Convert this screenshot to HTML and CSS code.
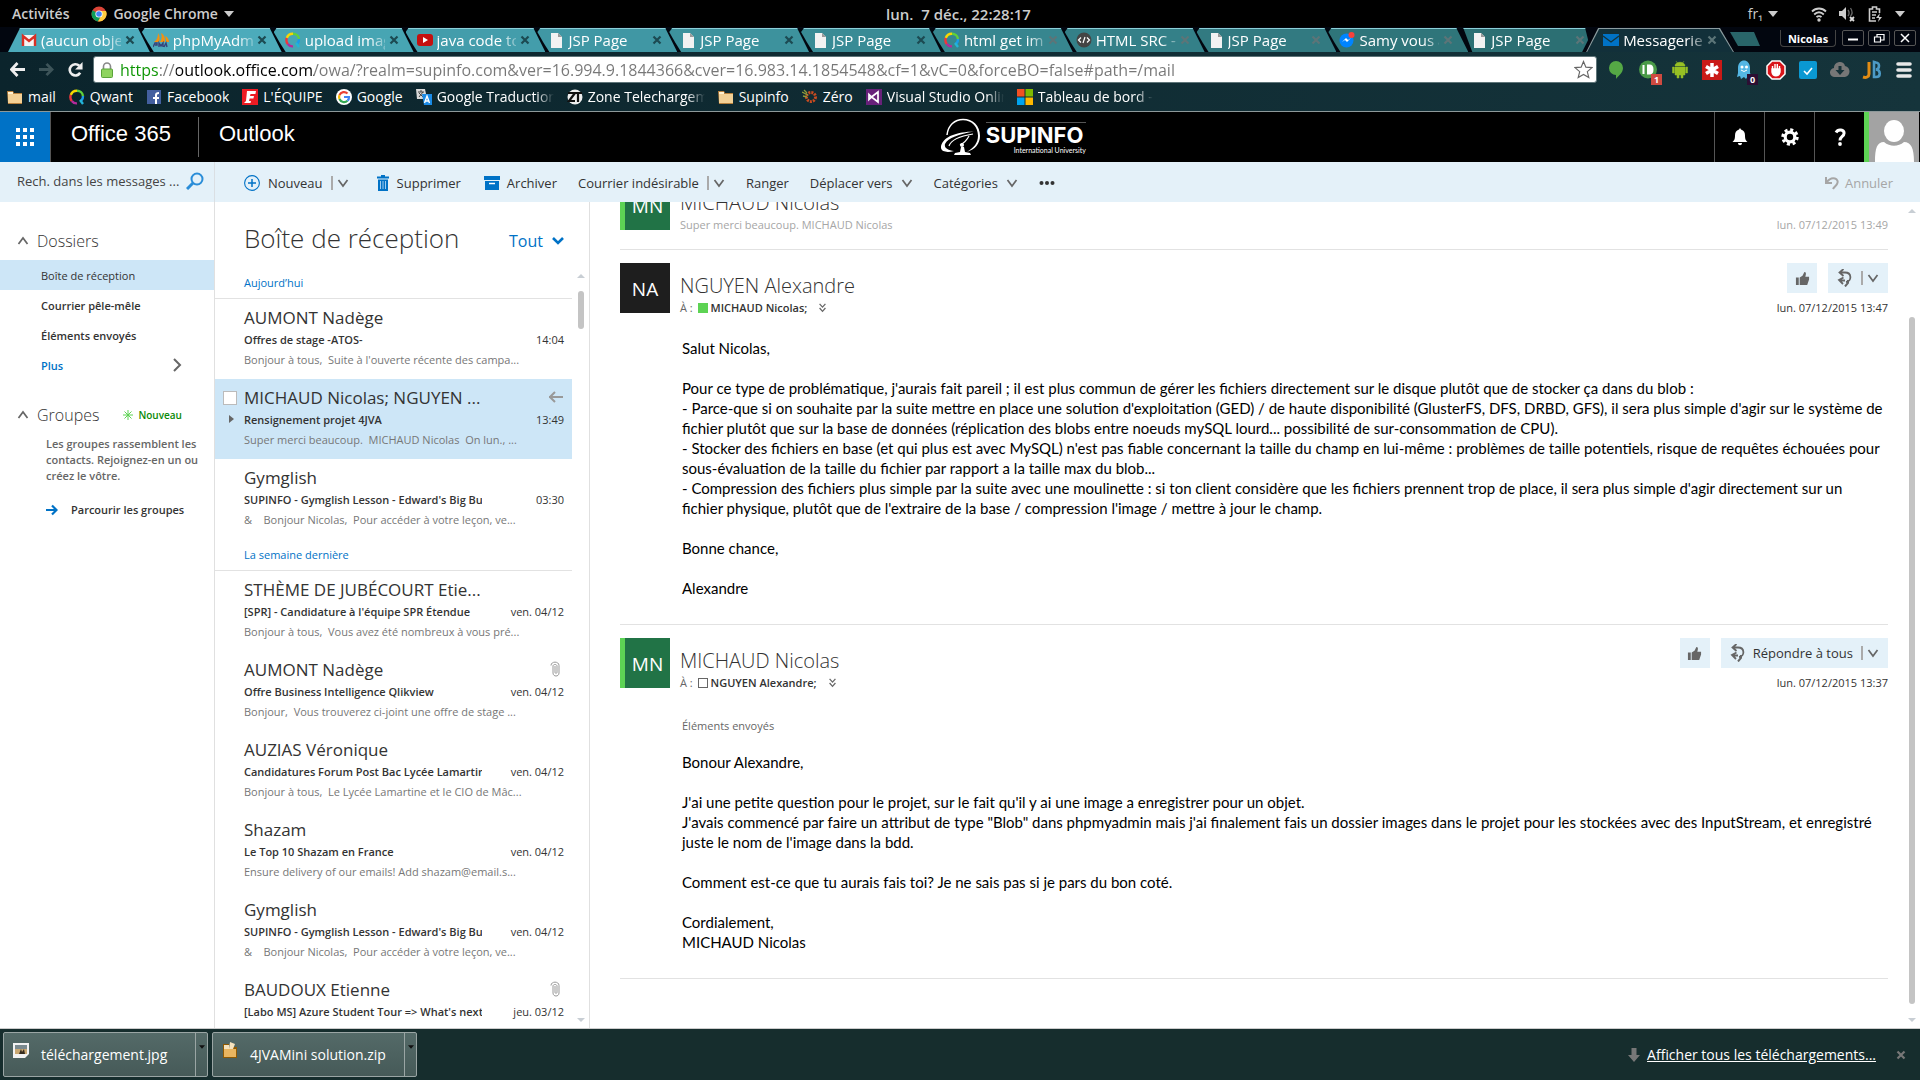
FILE: index.html
```html
<!DOCTYPE html>
<html lang="fr">
<head>
<meta charset="utf-8">
<title>Messagerie</title>
<link rel="stylesheet" href="styles.css">
</head>
<body>
<svg class="defs" aria-hidden="true">
  <symbol id="page" viewBox="0 0 16 16"><path d="M3 1h7l4 4v11H3z" fill="#f2f2f2"/><path d="M10 1v4h4z" fill="#9a9a9a"/></symbol>
  <symbol id="qwant" viewBox="0 0 16 16"><g fill="none" stroke-width="2.4"><path d="M1.8 6A6.4 6.4 0 0 1 8 1.8" stroke="#f8d800"/><path d="M8 1.8A6 6 0 0 1 14 7" stroke="#5fd03a"/><path d="M14 7a6 6 0 0 1-2 5" stroke="#1c9be8"/><path d="M1.8 6a6.2 6.2 0 0 0 1 6" stroke="#f0363c"/><path d="M2.8 12A6 6 0 0 0 8 14.4" stroke="#b42a9c"/><path d="M11 11l3 4" stroke="#23b5d8"/></g></symbol>
  <symbol id="folder" viewBox="0 0 16 16"><path d="M0 2h6l1 2h8v11H1z" fill="#b67f3c"/><path d="M1 5h14v9H1z" fill="#f3d095"/><path d="M1 3h5v2H1z" fill="#fff0d0"/></symbol>
  <symbol id="chev" viewBox="0 0 12 12"><path d="M1.500 3l4.500 6 4.500-6" fill="none" stroke="currentColor" stroke-width="1.700"/></symbol>
  <symbol id="chevup" viewBox="0 0 12 12"><path d="M1.500 9l4.500-6 4.500 6" fill="none" stroke="currentColor" stroke-width="1.700"/></symbol>
  <symbol id="cross" viewBox="0 0 10 10"><path d="M1.500 1.500l7 7m0-7l-7 7" stroke="currentColor" stroke-width="2.200"/></symbol>
  <symbol id="tri" viewBox="0 0 10 10"><path d="M0 2h10l-5 6z" fill="currentColor"/></symbol>
  <symbol id="clip" viewBox="0 0 10 16"><path d="M1 4.500C1 0 9 0 9 4.500V12c0 4-6 4-6 0V5c0-2 4-2 4 0v6.500c0 1-2 1-2 0V5" fill="none" stroke="currentColor"/></symbol>
  <symbol id="thumb" viewBox="0 0 16 16"><path d="M1 7h3v8H1zM5 7l3-2 2-4c2 0 2 2 1 5h4v3l-2 6H5z" fill="currentColor"/></symbol>
  <symbol id="replyall" viewBox="0 0 16 18"><path d="M6.500 0L2.500 3.500l4 3.500M3 3.500h5c7 0 7 9 1 9.500M6.500 8.500L2 11l4 4M2 11.500h6" fill="none" stroke="currentColor" stroke-width="1.800"/><path d="M11 11v3l-3 3.500" fill="none" stroke="currentColor" stroke-width="2"/></symbol>
  <symbol id="dbl" viewBox="0 0 10 12"><path d="M1.500 1L5 5l3.500-4M1.500 6L5 10l3.500-4" fill="none" stroke="currentColor" stroke-width="1.500"/></symbol>
</svg>

<header class="desk">
  <div class="desk-left">
    <span>Activités</span>
    <span class="app"><svg class="i16" viewBox="0 0 16 16"><circle cx="8" cy="8" r="7.500" fill="#db4437"/><path d="M8 8L1.500 4.200A7.500 7.500 0 0 0 7 15.400l3-5.400z" fill="#0f9d58"/><path d="M8 8h-1l3 2-3 5.400A7.500 7.500 0 0 0 15 5H8z" fill="#ffcd40"/><circle cx="8" cy="8" r="3.600" fill="#fff"/><circle cx="8" cy="8" r="2.800" fill="#4285f4"/></svg>Google Chrome<svg class="i10"><use href="#tri"/></svg></span>
  </div>
  <time class="clock">lun.&nbsp; 7 déc., 22:28:17</time>
  <div class="desk-right">
    <span class="lang">fr₁<svg class="i10"><use href="#tri"/></svg></span>
    <svg class="i16" viewBox="0 0 16 16"><g fill="none" stroke="#ccc" stroke-width="1.800"><path d="M1 5.500c4-4 10-4 14 0M3.200 8.500c3-3 6.600-3 9.600 0M5.500 11.200c1.500-1.500 3.500-1.500 5 0"/></g><circle cx="8" cy="14" r="1.700" fill="#ccc"/></svg>
    <svg class="i16" viewBox="0 0 16 16"><path d="M0 5h3l4-4v13l-4-4H0z" fill="#ccc"/><path d="M9 4c1.500 2 1.500 4 0 6M11.500 2c2 3 2 6 0 8" fill="none" stroke="#666" stroke-width="1.300"/><path d="M11 11l4 4m0-4l-4 4" stroke="#ddd" stroke-width="1.800"/></svg>
    <svg class="i16" viewBox="0 0 16 16"><path d="M9 15H2.500V3h3V1h4v2h3v4M5 6h5M5 9h4M5 12h3" fill="none" stroke="#ccc" stroke-width="1.600"/><path d="M13 7l-4 5h3l-1 4 4-5h-3z" fill="#ccc"/></svg>
    <svg class="i10"><use href="#tri"/></svg>
  </div>
</header>

<div class="strip">
  <nav class="tabs" aria-label="Onglets">
    <div class="tab"><svg class="i16" viewBox="0 0 16 16"><path d="M1 3h14v11H1z" fill="#f4f4f4"/><path d="M2 14V4l6 5 6-5v10" fill="none" stroke="#d93025" stroke-width="2.400"/></svg><span class="lbl">(aucun objet)</span><button aria-label="Fermer"><svg><use href="#cross"/></svg></button></div>
    <div class="tab"><svg class="i16" viewBox="0 0 16 16"><path d="M1 10c3-2 4-5 4-9 2 3 2 6 1 9zM7 10c2-3 2-6 1-9 4 2 4 6 4 9zM13 10c0-2 0-4-1-6 3 1 4 4 4 6z" fill="#f29111"/><path d="M0 15l2-4h2v2H2m4 2v-4l2 3 2-3v4m1 0l2-4 1 4" fill="none" stroke="#37427a" stroke-width="1.400"/></svg><span class="lbl">phpMyAdmin</span><button aria-label="Fermer"><svg><use href="#cross"/></svg></button></div>
    <div class="tab"><svg class="i16"><use href="#qwant"/></svg><span class="lbl">upload image</span><button aria-label="Fermer"><svg><use href="#cross"/></svg></button></div>
    <div class="tab"><svg class="i16" viewBox="0 0 16 16"><rect y="2" width="16" height="12" rx="3" fill="#c4100f"/><path d="M6 5l5 3-5 3z" fill="#fff"/></svg><span class="lbl">java code to</span><button aria-label="Fermer"><svg><use href="#cross"/></svg></button></div>
    <div class="tab"><svg class="i16"><use href="#page"/></svg><span class="lbl">JSP Page</span><button aria-label="Fermer"><svg><use href="#cross"/></svg></button></div>
    <div class="tab"><svg class="i16"><use href="#page"/></svg><span class="lbl">JSP Page</span><button aria-label="Fermer"><svg><use href="#cross"/></svg></button></div>
    <div class="tab"><svg class="i16"><use href="#page"/></svg><span class="lbl">JSP Page</span><button aria-label="Fermer"><svg><use href="#cross"/></svg></button></div>
    <div class="tab"><svg class="i16"><use href="#qwant"/></svg><span class="lbl">html get image</span><button aria-label="Fermer"><svg><use href="#cross"/></svg></button></div>
    <div class="tab"><svg class="i16" viewBox="0 0 16 16"><circle cx="8" cy="8" r="7.500" fill="#444"/><path d="M5 5.500L2.500 8 5 10.500M11 5.500L13.500 8 11 10.500M9 5l-2 6" fill="none" stroke="#fff" stroke-width="1.200"/></svg><span class="lbl">HTML SRC -</span><button aria-label="Fermer"><svg><use href="#cross"/></svg></button></div>
    <div class="tab"><svg class="i16"><use href="#page"/></svg><span class="lbl">JSP Page</span><button aria-label="Fermer"><svg><use href="#cross"/></svg></button></div>
    <div class="tab"><svg class="i16" viewBox="0 0 16 16"><circle cx="7.500" cy="8.500" r="7" fill="#0084ff"/><path d="M3 10l4-4 2 2 3-2-4 4-2-2z" fill="#fff"/><circle cx="12.500" cy="3" r="3" fill="#f8413b"/></svg><span class="lbl">Samy vous a</span><button aria-label="Fermer"><svg><use href="#cross"/></svg></button></div>
    <div class="tab"><svg class="i16"><use href="#page"/></svg><span class="lbl">JSP Page</span><button aria-label="Fermer"><svg><use href="#cross"/></svg></button></div>
    <div class="tab active"><svg class="i16" viewBox="0 0 16 16"><path d="M0 2h16v12H0z" fill="#0072c6"/><path d="M0 4l8 6 8-6" fill="none" stroke="#12333b" stroke-width="1.300"/></svg><span class="lbl">Messagerie</span><button aria-label="Fermer"><svg><use href="#cross"/></svg></button></div>
  </nav>
  <div class="strip-right">
    <button class="newtab" aria-label="Nouvel onglet"></button>
    <button class="user">Nicolas</button>
    <div class="wins">
      <button aria-label="Réduire"><svg viewBox="0 0 20 14"><path d="M5 8.500h10" stroke="#fff" stroke-width="2"/></svg></button>
      <button aria-label="Restaurer"><svg viewBox="0 0 20 14"><path d="M8 6V3.500h7V9h-3M5.500 6h6v5h-6z" fill="none" stroke="#fff" stroke-width="1.200"/></svg></button>
      <button aria-label="Fermer"><svg viewBox="0 0 20 14"><path d="M6 3l8 8m0-8l-8 8" stroke="#fff" stroke-width="1.500"/></svg></button>
    </div>
  </div>
</div>

<div class="chrome">
  <div class="navrow">
    <div class="navbtns">
      <button aria-label="Retour"><svg viewBox="0 0 16 16"><path d="M8 1L1.500 8 8 15M2 8h14" fill="none" stroke="#eee" stroke-width="3"/></svg></button>
      <button aria-label="Avancer"><svg viewBox="0 0 16 16"><path d="M8 2l6 6-6 6M0 8h13" fill="none" stroke="#3d5459" stroke-width="3"/></svg></button>
      <button aria-label="Actualiser"><svg viewBox="0 0 16 16"><path d="M13 11.500A6 6 0 1 1 12 4" fill="none" stroke="#eee" stroke-width="2.800"/><path d="M15.500 0v8h-8z" fill="#eee"/></svg></button>
    </div>
    <div class="omni">
      <svg class="lock" viewBox="0 0 12 16"><path d="M2.500 8V4.500a3.500 3.500 0 0 1 7 0V8" fill="none" stroke="#888" stroke-width="1.600"/><rect x=".500" y="7" width="11" height="8.500" rx="1" fill="#8fd45f" stroke="#5ba33a"/></svg>
      <input class="url" aria-label="Adresse" value="https://outlook.office.com/owa/?realm=supinfo.com&amp;ver=16.994.9.1844366&amp;cver=16.983.14.1854548&amp;cf=1&amp;vC=0&amp;forceBO=false#path=/mail">
      <svg class="star" viewBox="0 0 20 20"><path d="M10 1.500l2.500 6 6.500.500-5 4.200 1.600 6.300L10 15.200 4.400 18.500 6 12.200 1 8l6.500-.500z" fill="#fff" stroke="#666" stroke-width="1.200"/></svg>
    </div>
    <div class="exts">
      <svg viewBox="0 0 20 20"><path d="M10 1a7 7 0 0 1 7 7c0 5-5 8-7 11v-4a7 7 0 0 1 0-14z" fill="#55a845"/></svg>
      <span class="ext"><svg viewBox="0 0 20 20"><circle cx="10" cy="9.500" r="9" fill="#4a9a48"/><path d="M5.500 5v9M10 5.500v8h1.500c4 0 4-8 0-8z" fill="#fff" stroke="#fff" stroke-width="2"/></svg><b class="badge red">1</b></span>
      <svg viewBox="0 0 20 20"><path d="M5 7h10v8H5zM5 6c0-5 10-5 10 0zM2.500 7h1.800v6H2.500zM15.700 7h1.800v6h-1.800zM7 14h2v4H7zM11 14h2v4h-2zM6 1l2 3m6-3l-2 3" fill="#97c024" stroke="#97c024" stroke-width=".500"/></svg>
      <svg viewBox="0 0 20 20"><path d="M0 0h20v20H0z" fill="#ca1a17"/><path d="M10 3v14M4 6.500l12 7M16 6.500l-12 7" stroke="#fff" stroke-width="3.500"/></svg>
      <span class="ext"><svg viewBox="0 0 20 20"><path d="M4 8c0-10 12-10 12 0v5l2 4-4-1-2 3-2-2-3 2-1-3-3 1 1-4z" fill="#54b6e4"/><circle cx="8" cy="7" r="1.500" fill="#fff"/><circle cx="12.500" cy="7" r="1.500" fill="#fff"/><path d="M7 10q3 3 6 0" stroke="#fff" fill="none"/></svg><b class="badge">0</b></span>
      <svg viewBox="0 0 20 20"><path d="M6 1h8l5 5v8l-5 5H6l-5-5V6z" fill="#d9141a" stroke="#fff" stroke-width="1.500"/><path d="M6.500 10V6M9 9V4M11.300 9V4M13.500 10V6M6 9v3c1 5 7 5 8 0V9z" stroke="#fff" stroke-width="1.400" fill="#fff"/></svg>
      <svg viewBox="0 0 20 20"><rect x="1" y="1" width="18" height="18" rx="2" fill="#0a98d2"/><path d="M6 11l3 3 5-6" fill="none" stroke="#fff" stroke-width="1.600"/></svg>
      <svg viewBox="0 0 20 20"><path d="M5 17a4.500 4.500 0 0 1-1-9c0-7 10-8 11-2 6 1 6 10 0 11z" fill="#777"/><path d="M8.500 6h3v4h3L10 15l-4.500-5h3z" fill="#173239"/></svg>
      <svg viewBox="0 0 20 20"><path d="M7 2v12c0 3-3 4-6 3" fill="none" stroke="#e28c14" stroke-width="3"/><path d="M12 2v15h2c5 0 5-7 0-7.500 4-.500 4-7 0-7z" fill="none" stroke="#4c9ac6" stroke-width="2.600"/></svg>
      <svg viewBox="0 0 20 20"><path d="M4 4h12M4 10h12M4 16h12" stroke="#e8e8e8" stroke-width="3.600" stroke-linecap="round"/></svg>
    </div>
  </div>
  <nav class="marks" aria-label="Favoris">
    <a href="#"><svg class="i16"><use href="#folder"/></svg><span>mail</span></a>
    <a href="#"><svg class="i16"><use href="#qwant"/></svg><span>Qwant</span></a>
    <a href="#"><svg class="i16" viewBox="0 0 16 16"><path d="M1 1h14v14H1z" fill="#435f9f"/><path d="M10 15V9M7 9h6M10 9V6c0-1.500 1-2 3-2" fill="none" stroke="#fff" stroke-width="2"/></svg><span>Facebook</span></a>
    <a href="#"><svg class="i16" viewBox="0 0 16 16"><path d="M0 0h16v16H0z" fill="#ed1c24"/><path d="M5 2h9l-.600 3H8.500L8 7h4l-.600 2.500H7.600L7 12h2l-.500 2H2l2-2z" fill="#fff"/></svg><span>L'ÉQUIPE</span></a>
    <a href="#"><svg class="i16" viewBox="0 0 16 16"><circle cx="8" cy="8" r="8" fill="#fff"/><g fill="none" stroke-width="2.200"><path d="M11.500 4.500A5 5 0 0 0 3.500 6" stroke="#ea4335"/><path d="M3.500 6a5 5 0 0 0 0 4" stroke="#fbbc05"/><path d="M3.500 10a5 5 0 0 0 8 1.800" stroke="#34a853"/><path d="M11.500 11.800A5 5 0 0 0 13 8H8" stroke="#4285f4"/></g></svg><span>Google</span></a>
    <a href="#"><svg class="i16" viewBox="0 0 16 16"><path d="M0 0h9l2 10H1z" fill="#d9d9d9"/><path d="M2 3h6M5 1v2M3 8l4-5M3 4l4 4" stroke="#444" fill="none"/><path d="M6 5h10v11H8z" fill="#1a8ae6"/><path d="M8.500 14L11 7l2.500 7M9.500 12h3" stroke="#fff" fill="none" stroke-width="1.400"/></svg><span>Google Traduction</span></a>
    <a href="#"><svg class="i16" viewBox="0 0 16 16"><circle cx="8" cy="8" r="7.500" fill="#eee"/><path d="M1 4h7l-6 8h6M7 4h8M11 4v9" stroke="#111" stroke-width="2.200" fill="none"/></svg><span>Zone Telechargement</span></a>
    <a href="#"><svg class="i16"><use href="#folder"/></svg><span>Supinfo</span></a>
    <a href="#"><svg class="i16" viewBox="0 0 16 16"><circle cx="9" cy="8" r="4.500" fill="none" stroke="#c84b20" stroke-width="3" stroke-dasharray="2 1"/><path d="M0 3l6 3M1 7l4 1M2 1l3 3" stroke="#8f9a3a" stroke-width="1.300"/></svg><span>Zéro</span></a>
    <a href="#"><svg class="i16" viewBox="0 0 16 16"><path d="M0 0h16v16H0z" fill="#68217a"/><path d="M3 5.500v5l2.500-2.500zM5.500 8L12 3v10z" fill="none" stroke="#fff" stroke-width="1.700"/></svg><span>Visual Studio Online</span></a>
    <a href="#"><svg class="i16" viewBox="0 0 16 16"><path d="M0 0h7.500v7.500H0z" fill="#f25022"/><path d="M8.500 0H16v7.500H8.500z" fill="#7fba00"/><path d="M0 8.500h7.500V16H0z" fill="#00a4ef"/><path d="M8.500 8.500H16V16H8.500z" fill="#ffb900"/></svg><span>Tableau de bord -</span></a>
  </nav>
</div>

<header class="suite">
  <button class="waffle" aria-label="Lanceur d'applications"><svg viewBox="0 0 18 18"><path d="M0 0h4v4H0zM7 0h4v4H7zM14 0h4v4h-4zM0 7h4v4H0zM7 7h4v4H7zM14 7h4v4h-4zM0 14h4v4H0zM7 14h4v4H7zM14 14h4v4h-4z" fill="#fff"/></svg></button>
  <a class="brand" href="#">Office 365</a>
  <a class="brand sub" href="#">Outlook</a>
  <div class="logo">
    <svg viewBox="0 0 40 38"><path d="M6 17C7 7 14 1.500 22 1.500" fill="none" stroke="#fff" stroke-width="1.500"/><path d="M22 .800c10 0 17 7 17 17 0 8-5 14-13 16 7-4 11-9 11-16C37 9 31 2.200 22 2.200z" fill="#fff"/><path d="M0 28C3 18 16 14 33 13.500 18 16 7 20 4 26c-1 4 3 6 9 7-7 2-14 1-13-5z" fill="#fff"/><path d="M8 28c2-6 11-10 24-12M28 18c-2 4-5 7-9 9" fill="none" stroke="#fff" stroke-width="1.200"/><circle cx="21" cy="27" r="2" fill="#fff"/><path d="M20 29h3l1 5 5 1 1 2H13l1-2 5-1z" fill="#fff"/></svg>
    <div class="logo-text"><strong>SUPINFO</strong><small>International University</small></div>
  </div>
  <div class="suite-right">
    <button aria-label="Notifications"><svg viewBox="0 0 18 18"><path d="M9 0l1 1.500c3 1 4 3 4 6 0 4 1 5 2.500 6.500h-15C3 12.500 4 11.500 4 7.500c0-3 1-5 4-6zM7 15h4c0 3-4 3-4 0z" fill="#fff"/></svg></button>
    <button aria-label="Paramètres"><svg viewBox="0 0 18 18"><circle cx="9" cy="9" r="4.800" fill="none" stroke="#fff" stroke-width="3.200"/><circle cx="9" cy="9" r="7.200" fill="none" stroke="#fff" stroke-width="3" stroke-dasharray="3 2.650"/></svg></button>
    <button aria-label="Aide"><svg viewBox="0 0 18 18"><path d="M5 4.500c2-4 8.500-3 8 1 0 3-4 3-4 7" fill="none" stroke="#fff" stroke-width="3"/><circle cx="9" cy="16" r="1.900" fill="#fff"/></svg></button>
    <button class="me" aria-label="Mon compte"><svg viewBox="0 0 50 50"><path d="M0 0h50v50H0z" fill="#a3a3a3"/><ellipse cx="25" cy="19" rx="10" ry="11" fill="#fff"/><path d="M6 50c0-14 2-20 9-20 6 5 14 5 20 0 7 0 10 6 10 20z" fill="#fff"/></svg></button>
  </div>
</header>

<div class="cmd">
  <form class="search"><input aria-label="Rechercher" placeholder="Rech. dans les messages ..."><button type="button" aria-label="Rechercher"><svg viewBox="0 0 18 18"><circle cx="11" cy="7" r="5.500" fill="none" stroke="#2a8dd8" stroke-width="2"/><path d="M7 11l-6 6" stroke="#2a8dd8" stroke-width="3"/></svg></button></form>
  <div class="actions">
    <div class="act new"><button><svg class="i16 blue" viewBox="0 0 16 16"><circle cx="8" cy="8" r="7.400" fill="none" stroke="currentColor" stroke-width="1.100"/><path d="M8 4v8M4 8h8" stroke="currentColor" stroke-width="1.500"/></svg>Nouveau</button><button class="split" aria-label="Options"><svg><use href="#chev"/></svg></button></div>
    <div class="act trash"><button><svg class="trashicon blue" viewBox="0 0 12 16"><path d="M0 1.500h12v2H0zM4 0h4v1.500H4zM1 4.500h10V16H1z" fill="currentColor"/><path d="M3.500 6v8M6 6v8M8.500 6v8" stroke="#9fcdf0"/></svg>Supprimer</button></div>
    <div class="act"><button class="tight"><svg class="i16 blue" viewBox="0 0 16 16"><path d="M0 1h16v4H0zM1 6h14v9H1z" fill="currentColor"/><path d="M5 8.500h6" stroke="#fff" stroke-width="1.500"/></svg>Archiver</button></div>
    <div class="act junk"><button>Courrier indésirable</button><button class="split" aria-label="Options"><svg><use href="#chev"/></svg></button></div>
    <div class="act"><button>Ranger</button></div>
    <div class="act"><button>Déplacer vers<svg class="i12"><use href="#chev"/></svg></button></div>
    <div class="act"><button>Catégories<svg class="i12"><use href="#chev"/></svg></button></div>
    <div class="act"><button aria-label="Plus d'actions"><svg class="i16" viewBox="0 0 16 16"><circle cx="2.500" cy="8" r="2" fill="#333"/><circle cx="8" cy="8" r="2" fill="#333"/><circle cx="13.500" cy="8" r="2" fill="#333"/></svg></button></div>
    <button class="undo" disabled><svg viewBox="0 0 14 14"><path d="M1 1v6h6M1.500 6.500C7-1 15 3 12 8c-1 2-3 3-4 5" fill="none" stroke="currentColor" stroke-width="2"/></svg>Annuler</button>
  </div>
</div>

<main class="main">
  <nav class="side">
    <h2><svg class="i12"><use href="#chevup"/></svg>Dossiers</h2>
    <ul>
      <li><a class="sel" href="#">Boîte de réception</a></li>
      <li><a class="sb" href="#">Courrier pêle-mêle</a></li>
      <li><a class="sb" href="#">Éléments envoyés</a></li>
      <li><a class="sb more" href="#">Plus<svg viewBox="0 0 12 14"><path d="M2 1l6 6-6 6" fill="none" stroke="#666" stroke-width="2"/></svg></a></li>
    </ul>
    <h2 class="groups"><svg class="i12"><use href="#chevup"/></svg>Groupes<span class="fresh"><svg class="i10" viewBox="0 0 10 10"><path d="M5 0v10M0 5h10M1.500 1.500l7 7m0-7l-7 7" stroke="#5dd354"/></svg>Nouveau</span></h2>
    <p>Les groupes rassemblent les contacts. Rejoignez-en un ou créez le vôtre.</p>
    <a class="browse" href="#"><svg class="i12" viewBox="0 0 12 12"><path d="M0 6h10M6 1.500L10.500 6 6 10.500" fill="none" stroke="#0072c6" stroke-width="2.200"/></svg>Parcourir les groupes</a>
  </nav>

  <section class="list">
    <div class="list-head"><h1>Boîte de réception</h1><button>Tout<svg class="i12" viewBox="0 0 12 12"><path d="M1 3l5 5 5-5" fill="none" stroke="currentColor" stroke-width="2.600"/></svg></button></div>
    <div class="list-body">
      <div class="mails">
        <h3>Aujourd’hui</h3>
        <article class="mail"><div class="from">AUMONT Nadège</div><div class="subj"><b>Offres de stage -ATOS-</b><time>14:04</time></div><div class="prev">Bonjour à tous,&nbsp; Suite à l'ouverte récente des campa...</div></article>
        <article class="mail on"><input type="checkbox" aria-label="Sélectionner"><svg class="expand" viewBox="0 0 6 8"><path d="M0 0l5 4-5 4z" fill="#666"/></svg><div class="from">MICHAUD Nicolas; NGUYEN ...<svg class="flag" viewBox="0 0 14 12"><path d="M0 6h14M6 1L1 6l5 5" fill="none" stroke="currentColor" stroke-width="2"/></svg></div><div class="subj"><b>Rensignement projet 4JVA</b><time>13:49</time></div><div class="prev">Super merci beaucoup.&nbsp; MICHAUD Nicolas&nbsp; On lun., ...</div></article>
        <article class="mail"><div class="from">Gymglish</div><div class="subj"><b>SUPINFO - Gymglish Lesson - Edward's Big Business</b><time>03:30</time></div><div class="prev">&amp;&nbsp;&nbsp;&nbsp; Bonjour Nicolas,&nbsp; Pour accéder à votre leçon, ve...</div></article>
        <h3>La semaine dernière</h3>
        <article class="mail"><div class="from">STHÈME DE JUBÉCOURT Etie...</div><div class="subj"><b>[SPR] - Candidature à l'équipe SPR Étendue</b><time>ven. 04/12</time></div><div class="prev">Bonjour à tous,&nbsp; Vous avez été nombreux à vous pré...</div></article>
        <article class="mail"><div class="from">AUMONT Nadège<svg class="flag pin"><use href="#clip"/></svg></div><div class="subj"><b>Offre Business Intelligence Qlikview</b><time>ven. 04/12</time></div><div class="prev">Bonjour,&nbsp; Vous trouverez ci-joint une offre de stage ...</div></article>
        <article class="mail"><div class="from">AUZIAS Véronique</div><div class="subj"><b>Candidatures Forum Post Bac Lycée Lamartine</b><time>ven. 04/12</time></div><div class="prev">Bonjour à tous,&nbsp; Le Lycée Lamartine et le CIO de Mâc...</div></article>
        <article class="mail"><div class="from">Shazam</div><div class="subj"><b>Le Top 10 Shazam en France</b><time>ven. 04/12</time></div><div class="prev">Ensure delivery of our emails! Add shazam@email.s...</div></article>
        <article class="mail"><div class="from">Gymglish</div><div class="subj"><b>SUPINFO - Gymglish Lesson - Edward's Big Business</b><time>ven. 04/12</time></div><div class="prev">&amp;&nbsp;&nbsp;&nbsp; Bonjour Nicolas,&nbsp; Pour accéder à votre leçon, ve...</div></article>
        <article class="mail"><div class="from">BAUDOUX Etienne<svg class="flag pin"><use href="#clip"/></svg></div><div class="subj"><b>[Labo MS] Azure Student Tour =&gt; What's next</b><time>jeu. 03/12</time></div><div class="prev">Labo-azure-Tech-tour@labo-ms.fr&nbsp; | Bonjour à tous, ...</div></article>
      </div>
      <div class="rail"><i class="up"></i><i class="thumb small"></i><i class="down"></i></div>
    </div>
  </section>

  <section class="read">
    <div class="thread">
      <article class="msg closed">
        <div class="avatar mn">MN</div>
        <div class="who"><h2>MICHAUD Nicolas</h2><div class="line"><span>Super merci beaucoup. MICHAUD Nicolas</span><time>lun. 07/12/2015 13:49</time></div></div>
      </article>
      <article class="msg">
        <div class="avatar na">NA</div>
        <div class="who">
          <div class="top"><h2>NGUYEN Alexandre</h2><div class="btns"><button aria-label="J'aime"><svg class="like"><use href="#thumb"/></svg></button><div class="reply"><button aria-label="Répondre à tous"><svg class="ra"><use href="#replyall"/></svg></button><button class="split" aria-label="Options"><svg><use href="#chev"/></svg></button></div></div></div>
          <div class="line"><span>À : <i class="pres on"></i><b>MICHAUD Nicolas;</b><svg class="dbl"><use href="#dbl"/></svg></span><time>lun. 07/12/2015 13:47</time></div>
        </div>
        <div class="body">
          <p>Salut Nicolas,</p>
          <p>Pour ce type de problématique, j'aurais fait pareil ; il est plus commun de gérer les fichiers directement sur le disque plutôt que de stocker ça dans du blob :<br>- Parce-que si on souhaite par la suite mettre en place une solution d'exploitation (GED) / de haute disponibilité (GlusterFS, DFS, DRBD, GFS), il sera plus simple d'agir sur le système de fichier plutôt que sur la base de données (réplication des blobs entre noeuds mySQL lourd... possibilité de sur-consommation de CPU).<br>- Stocker des fichiers en base (et qui plus est avec MySQL) n'est pas fiable concernant la taille du champ en lui-même : problèmes de taille potentiels, risque de requêtes échouées pour sous-évaluation de la taille du fichier par rapport a la taille max du blob...<br>- Compression des fichiers plus simple par la suite avec une moulinette : si ton client considère que les fichiers prennent trop de place, il sera plus simple d'agir directement sur un fichier&nbsp;physique, plutôt que de l'extraire de la base / compression l'image / mettre à jour le champ.</p>
          <p>Bonne chance,</p>
          <p>Alexandre</p>
        </div>
      </article>
      <article class="msg last">
        <div class="avatar mn">MN</div>
        <div class="who">
          <div class="top"><h2>MICHAUD Nicolas</h2><div class="btns"><button aria-label="J'aime"><svg class="like"><use href="#thumb"/></svg></button><div class="reply"><button><svg class="ra"><use href="#replyall"/></svg>Répondre à tous</button><button class="split" aria-label="Options"><svg><use href="#chev"/></svg></button></div></div></div>
          <div class="line"><span>À : <i class="pres"></i><b>NGUYEN Alexandre;</b><svg class="dbl"><use href="#dbl"/></svg></span><time>lun. 07/12/2015 13:37</time></div>
        </div>
        <div class="body">
          <div class="where">Éléments envoyés</div>
          <p>Bonour Alexandre,</p>
          <p>J'ai une petite question pour le projet, sur le fait qu'il y ai une image a enregistrer pour un objet.<br>J'avais commencé par faire un attribut de type "Blob" dans phpmyadmin mais j'ai finalement fais un dossier images dans le projet pour les stockées avec des InputStream, et enregistré juste le nom de l'image dans la bdd.</p>
          <p>Comment est-ce que tu aurais fais toi? Je ne sais pas si je pars du bon coté.</p>
          <p>Cordialement,<br>MICHAUD Nicolas</p>
        </div>
      </article>
    </div>
    <div class="rail"><i class="up"></i><i class="thumb big"></i><i class="down"></i></div>
  </section>
</main>

<footer class="downloads">
  <div class="dl"><button><svg class="i16" viewBox="0 0 16 16"><path d="M0 1h16v11l-4 4H0z" fill="#f2f2f2"/><path d="M2 3h12v9H2z" fill="#c9a873"/><path d="M2 3h12v4H2z" fill="#7b8a8f"/><path d="M6 12l2-5 1 3 2-3 1 5z" fill="#352b1e"/></svg>téléchargement.jpg</button><button class="dd" aria-label="Options"><svg><use href="#tri"/></svg></button></div>
  <div class="dl"><button><svg class="i16" viewBox="0 0 16 16"><path d="M1 2h6v3h8v11H1z" fill="#8f5902"/><path d="M2 7h12v8H2z" fill="#e9b560"/><path d="M2 3h5v4H2zM8 0l5 2-2 5H7z" fill="#f7e3bd"/></svg>4JVAMini solution.zip</button><button class="dd" aria-label="Options"><svg><use href="#tri"/></svg></button></div>
  <div class="all"><svg class="darr" viewBox="0 0 12 14"><path d="M3.500 0h5v7H12l-6 7-6-7h3.500z" fill="#777"/></svg><a href="#">Afficher tous les téléchargements...</a><button aria-label="Fermer"><svg class="i10"><use href="#cross"/></svg></button></div>
</footer>
</body>
</html>
```
FILE: styles.css
```css
* { box-sizing: border-box; }
body { margin: 0; height: 100vh; display: flex; flex-direction: column; overflow: hidden; font-family: "Open Sans", "Noto Sans", sans-serif; font-size: 13px; color: #333; background: #fff; }
button { border: 0; padding: 0; margin: 0; background: none; font: inherit; color: inherit; display: flex; align-items: center; justify-content: center; white-space: nowrap; }
a { color: inherit; text-decoration: none; }
h1, h2, h3, p, ul { margin: 0; padding: 0; font-weight: 400; list-style: none; }
svg { flex: none; display: block; }
.defs { position: absolute; width: 0; height: 0; }
.i16 { width: 16px; height: 16px; }
.i12 { width: 12px; height: 12px; }
.i10 { width: 10px; height: 10px; }
.blue { color: #0072c6; }

/* desktop bar */
.desk { flex: none; height: 27px; background: #000; color: #ccc; display: grid; grid-template-columns: 1fr auto 1fr; align-items: center; font-size: 14px; font-weight: 600; padding: 0 15px 0 12px; }
.clock { font-size: 15px; }
.desk-left, .desk-right, .app, .lang { display: flex; align-items: center; }
.desk-left { gap: 22px; }
.app { gap: 6px; }
.desk-right { justify-content: flex-end; gap: 12px; }
.lang { gap: 5px; margin-right: 21px; font-weight: 400; }

/* tab strip */
.strip { flex: none; height: 25px; background: #02060f; display: flex; }
.tabs { flex: 1; min-width: 0; display: flex; padding: 1px 0 0 8px; }
.tab { flex: 1; min-width: 0; position: relative; display: flex; align-items: center; padding: 0 5px 0 13px; gap: 4px; color: #fff; font-size: 15px; --tone: #4cabbb; z-index: 0; }
.tab::before { content: ""; position: absolute; z-index: -1; inset: 0 -10px 0 2px; background: var(--tone); clip-path: polygon(3px 0, calc(100% - 12px) 0, 100% 100%, 12px 100%, 6px 60%, 0 4px); border-top: 1px solid #8ccfd8; }
.tab:first-child::before { inset: 0 -10px 0 0; clip-path: polygon(12px 0, calc(100% - 12px) 0, 100% 100%, 0 100%); }
.tab:nth-child(3) { --tone: #47a5b3; }
.tab:nth-child(4) { --tone: #439dab; }
.tab:nth-child(5) { --tone: #4097a4; }
.tab:nth-child(6) { --tone: #3d929d; }
.tab:nth-child(7) { --tone: #398b95; }
.tab:nth-child(8) { --tone: #37868f; }
.tab:nth-child(9) { --tone: #348088; }
.tab:nth-child(10) { --tone: #327a81; }
.tab:nth-child(11) { --tone: #2f757a; }
.tab:nth-child(12) { --tone: #2c6f73; }
.tab:nth-child(12)::before { right: 2px; clip-path: polygon(3px 0, calc(100% - 3px) 0, 100% 50%, calc(100% - 6px) 100%, 12px 100%); }
.tab.active::before { inset: 0 -12px 0 -4px; background: #8c9c9f; border: 0; clip-path: polygon(12px 0, calc(100% - 14px) 0, 100% 100%, 0 100%); }
.tab.active::after { content: ""; position: absolute; z-index: -1; inset: 1px -11px 0 -3px; background: #12303a; clip-path: polygon(12px 0, calc(100% - 14px) 0, 100% 100%, 0 100%); }
.lbl { flex: 1; min-width: 0; overflow: hidden; white-space: nowrap; mask-image: linear-gradient(to right, #000 80%, rgba(0, 0, 0, .3)); line-height: 22px; }
.tab button { color: #1c4a52; }
.tab button svg { width: 10px; height: 10px; }
.tab:nth-child(n+8) button { color: #5c7578; }
.strip-right { flex: none; display: flex; padding: 3px 4px 0 0; }
.newtab { width: 30px; height: 14px; margin: 2px 20px 0 8px; background: #296569; clip-path: polygon(0 0, 24px 0, 100% 100%, 8px 100%); }
.user { width: 56px; height: 17px; border: 1px solid #444; border-top: 0; border-radius: 0 0 4px 4px; color: #fff; font-size: 11px; font-weight: 700; }
.wins { display: flex; gap: 4px; margin-left: 6px; }
.wins button { width: 22px; height: 16px; border: 1px solid #555; border-radius: 2px; }
.wins svg { width: 20px; height: 14px; }

/* browser toolbar */
.chrome { flex: none; background: linear-gradient(to right, #0b242c, #15343b); border-bottom: 1px solid #8d9899; }
.navrow { display: flex; align-items: center; height: 34px; padding-top: 1px; padding-right: 6px; }
.navbtns { display: flex; gap: 14px; padding: 0 10px 0 10px; }
.navbtns svg { width: 15px; height: 15px; }
.omni { flex: 1; height: 27px; display: flex; align-items: center; background: #fff; border: 1px solid #5f7579; border-radius: 3px; padding: 0 3px 0 7px; }
.lock { width: 12px; height: 16px; }
.url { flex: 1; min-width: 0; border: 0; outline: 0; padding: 0; margin-left: 7px; font: 16px/22px "Open Sans", "Noto Sans", sans-serif; background: linear-gradient(to right, #0a9400 39px, #777 39px 56px, #000 56px 194px, #777 194px); -webkit-background-clip: text; background-clip: text; -webkit-text-fill-color: transparent; }
.star { width: 19px; height: 19px; }
.exts { display: flex; gap: 12px; padding-left: 9px; }
.exts svg { width: 20px; height: 20px; }
.ext { position: relative; }
.badge { position: absolute; right: -4px; bottom: -5px; width: 11px; height: 11px; background: #2c0f33; color: #fff; font-size: 9px; line-height: 11px; text-align: center; }
.badge.red { background: #cf4a40; }
.marks { display: flex; gap: 13px; height: 25px; align-items: center; padding: 0 7px 3px; color: #fff; font-size: 14px; }
.marks a { display: flex; align-items: center; gap: 5px; white-space: nowrap; }
.marks span { max-width: 117px; overflow: hidden; line-height: 20px; }
.marks a:nth-child(6) span, .marks a:nth-child(7) span, .marks a:nth-child(n+10) span { mask-image: linear-gradient(to right, #000 85%, transparent); }

/* Office suite header */
.suite { flex: none; height: 50px; background: #000; color: #fff; display: flex; align-items: center; position: relative; }
.waffle { width: 51px; height: 50px; background: #0072c6; border-right: 1px solid #555; }
.waffle svg { width: 18px; height: 18px; }
.brand { font: 22px/40px "Liberation Sans", sans-serif; padding: 0 27px 0 20px; height: 40px; margin-bottom: 6px; }
.brand.sub { border-left: 1px solid #666; margin-bottom: 0; line-height: 34px; }
.logo { position: absolute; left: 49%; top: 6px; display: flex; gap: 5px; }
.logo svg { width: 40px; height: 38px; }
.logo-text { width: 100px; border-top: 1px solid #555; margin-top: 4px; height: 32px; }
.logo-text strong { display: block; font: 700 22px/24px Inter, sans-serif; }
.logo-text small { display: block; font: 7px/6px "Lato", sans-serif; text-align: right; }
.suite-right { margin-left: auto; display: flex; padding-right: 1px; }
.suite-right button { width: 50px; height: 50px; border-left: 1px solid #555; }
.suite-right svg { width: 18px; height: 18px; }
.suite-right .me { width: 55px; border-left: 5px solid #5dd354; }
.suite-right .me svg { width: 50px; height: 50px; }

/* command bar */
.cmd { flex: none; height: 40px; background: #e4f1f9; display: flex; }
.search { flex: none; width: 214px; display: flex; align-items: center; padding: 0 10px 2px 17px; }
.search input { flex: 1; min-width: 0; border: 0; outline: 0; padding: 0; background: none; font: 13px/20px "Open Sans", sans-serif; }
.search input::placeholder { color: #444; opacity: 1; }
.search svg { width: 18px; height: 18px; }
.actions { flex: 1; display: flex; align-items: center; gap: 21px; padding: 2px 27px 0 29px; border-left: 1px solid #dadfe3; }
.act, .act button { display: flex; align-items: center; }
.act button { gap: 8px; }
.act .tight { gap: 7px; }
.act.trash { margin: 0 2px 0 7px; }
.split { border-left: 2px solid #aaa; height: 14px; margin-left: 8px; padding-left: 4px; }
.split svg { width: 12px; height: 12px; color: #666; }
.trashicon { width: 12px; height: 16px; }
.act .i12 { color: #666; }
.undo { margin-left: auto; color: #a6a6a6; gap: 6px; }
.undo svg { width: 14px; height: 14px; }

/* panes */
.main { flex: 1; min-height: 0; display: flex; border-bottom: 1px solid #ccc; }
.side { flex: none; width: 215px; border-right: 1px solid #e0e0e0; padding-top: 27px; font-size: 11px; }
.side h2 { display: flex; align-items: center; gap: 8px; height: 24px; padding-left: 17px; margin-bottom: 7px; font-size: 16px; font-weight: 300; }
.side h2 .i12 { color: #666; }
.side li a { display: flex; align-items: center; height: 30px; padding: 0 30px 0 41px; }
.side .sel { background: #cde6f7; }
.sb, .browse, .side p { font-weight: 600; }
.more { justify-content: space-between; color: #0072c6; }
.more svg { width: 12px; height: 14px; }
.side .groups { margin: 23px 0 9px; }
.fresh { display: flex; align-items: center; gap: 5px; margin-left: 16px; font-size: 10px; font-weight: 600; color: #0a8a08; }
.side p { padding: 0 8px 0 46px; line-height: 16px; color: #666; }
.browse { display: flex; align-items: center; gap: 13px; margin-top: 18px; padding-left: 46px; line-height: 16px; }

.list { flex: none; width: 375px; border-right: 1px solid #e0e0e0; display: flex; flex-direction: column; }
.list-head { flex: none; height: 65px; display: flex; align-items: center; justify-content: space-between; padding: 7px 25px 0 29px; }
.list-head h1 { font-size: 26px; line-height: 40px; font-weight: 300; }
.list-head button { gap: 9px; padding-top: 6px; font-size: 16px; color: #0072c6; }
.list-body { flex: 1; min-height: 0; display: flex; }
.mails { flex: 1; min-width: 0; overflow: hidden; font-size: 11px; }
.mails h3 { height: 32px; padding-left: 29px; line-height: 32px; font-size: 11px; color: #0072c6; border-bottom: 1px solid #e2e2e2; }
.mail { position: relative; height: 80px; padding: 8px 8px 0 29px; }
.mail.on { background: #cde6f7; }
.from { display: flex; justify-content: space-between; font-size: 17px; line-height: 22px; padding-right: 1px; }
.flag { width: 14px; height: 12px; margin-top: 4px; color: #999; }
.flag.pin { width: 10px; height: 16px; margin: 2px 3px 0 0; }
.subj { display: flex; justify-content: space-between; line-height: 20px; padding-top: 1px; }
.subj b { width: 238px; overflow: hidden; white-space: nowrap; font-weight: 600; }
.prev { line-height: 20px; color: #777; white-space: nowrap; }
.mail input { position: absolute; left: 8px; top: 12px; width: 14px; height: 14px; margin: 0; appearance: none; background: #fff; border: 1px solid #bbb; }
.expand { position: absolute; left: 14px; top: 36px; width: 6px; height: 8px; }
.rail { flex: none; width: 17px; display: flex; flex-direction: column; align-items: center; padding: 7px 0 6px; }
.rail i { flex: none; }
.up { border: 4px solid transparent; border-top: 0; border-bottom-color: #c8ced4; }
.down { border: 4px solid transparent; border-bottom: 0; border-top-color: #c8ced4; margin-top: auto; }
.rail .thumb { width: 6px; border-radius: 3px; background: #c4c4c4; }
.small { height: 38px; margin-top: 13px; }

.read { flex: 1; min-width: 0; display: flex; }
.thread { flex: 1; min-width: 0; overflow: hidden; display: flex; flex-direction: column; justify-content: flex-end; padding: 0 15px 49px 30px; }
.read .rail .big { flex: 1; margin: 104px 0 14px; }
.msg { flex: none; display: grid; grid-template-columns: 50px 1fr; column-gap: 10px; padding: 13px 0 26px; border-bottom: 1px solid #e2e2e2; }
.msg.closed { padding-bottom: 13px; }
.avatar { height: 50px; color: #fff; font-size: 19px; line-height: 52px; text-align: center; }
.na { background: #1e1e1e; }
.mn { background: #217346; border-left: 5px solid #5dd354; }
.top { display: flex; justify-content: space-between; height: 34px; }
.who h2 { font-size: 20px; line-height: 26px; padding-top: 10px; font-weight: 300; white-space: nowrap; }
.who > h2 { height: 34px; }
.btns { display: flex; gap: 11px; height: 30px; }
.btns > button { width: 30px; }
.btns > button, .reply { height: 30px; background: #e4f1f9; }
.reply { display: flex; align-items: center; padding: 0 9px 0 9px; }
.reply button { gap: 7px; }
.like { width: 15px; height: 15px; color: #666; }
.ra { width: 16px; height: 18px; color: #666; }
.line { display: flex; justify-content: space-between; font-size: 11px; line-height: 22px; }
.line span { display: flex; align-items: center; white-space: pre; }
.line > span { color: #666; }
.line b { font-weight: 600; color: #333; }
.pres { width: 10px; height: 10px; border: 1px solid #666; margin: 0 3px 0 2px; }
.pres.on { background: #5dd354; border-color: #5dd354; }
.dbl { width: 9px; height: 10px; margin-left: 11px; }
.closed .line, .closed .line span { color: #a6a6a6; }
.body { grid-column: 2; padding: 19px 3px 0 2px; font: 15px/20px Lato, sans-serif; color: #000; }
.body p + p { margin-top: 20px; }
.where { font: 11px/20px "Open Sans", sans-serif; color: #666; margin-bottom: 16px; padding-top: 3px; }

/* downloads shelf */
.downloads { flex: none; height: 51px; background: #162d2d; color: #fff; display: flex; align-items: center; gap: 4px; padding: 0 14px 0 3px; font-size: 14px; }
.dl { width: 205px; height: 45px; display: flex; background: linear-gradient(#546a68, #465a58); border: 1px solid #9aa5a4; border-radius: 2px; }
.dl > button:first-child { flex: 1; justify-content: flex-start; gap: 12px; padding: 0 9px; }
.dl .i16 { margin-bottom: 10px; }
.dd { width: 12px; border-left: 1px solid #9aa5a4; align-items: flex-start; padding-top: 11px; color: #111; }
.dd svg { width: 6px; height: 6px; }
.all { margin-left: auto; display: flex; align-items: center; gap: 7px; }
.darr { width: 12px; height: 14px; }
.all a { text-decoration: underline; }
.all button { margin-left: 13px; color: #777; }
```
